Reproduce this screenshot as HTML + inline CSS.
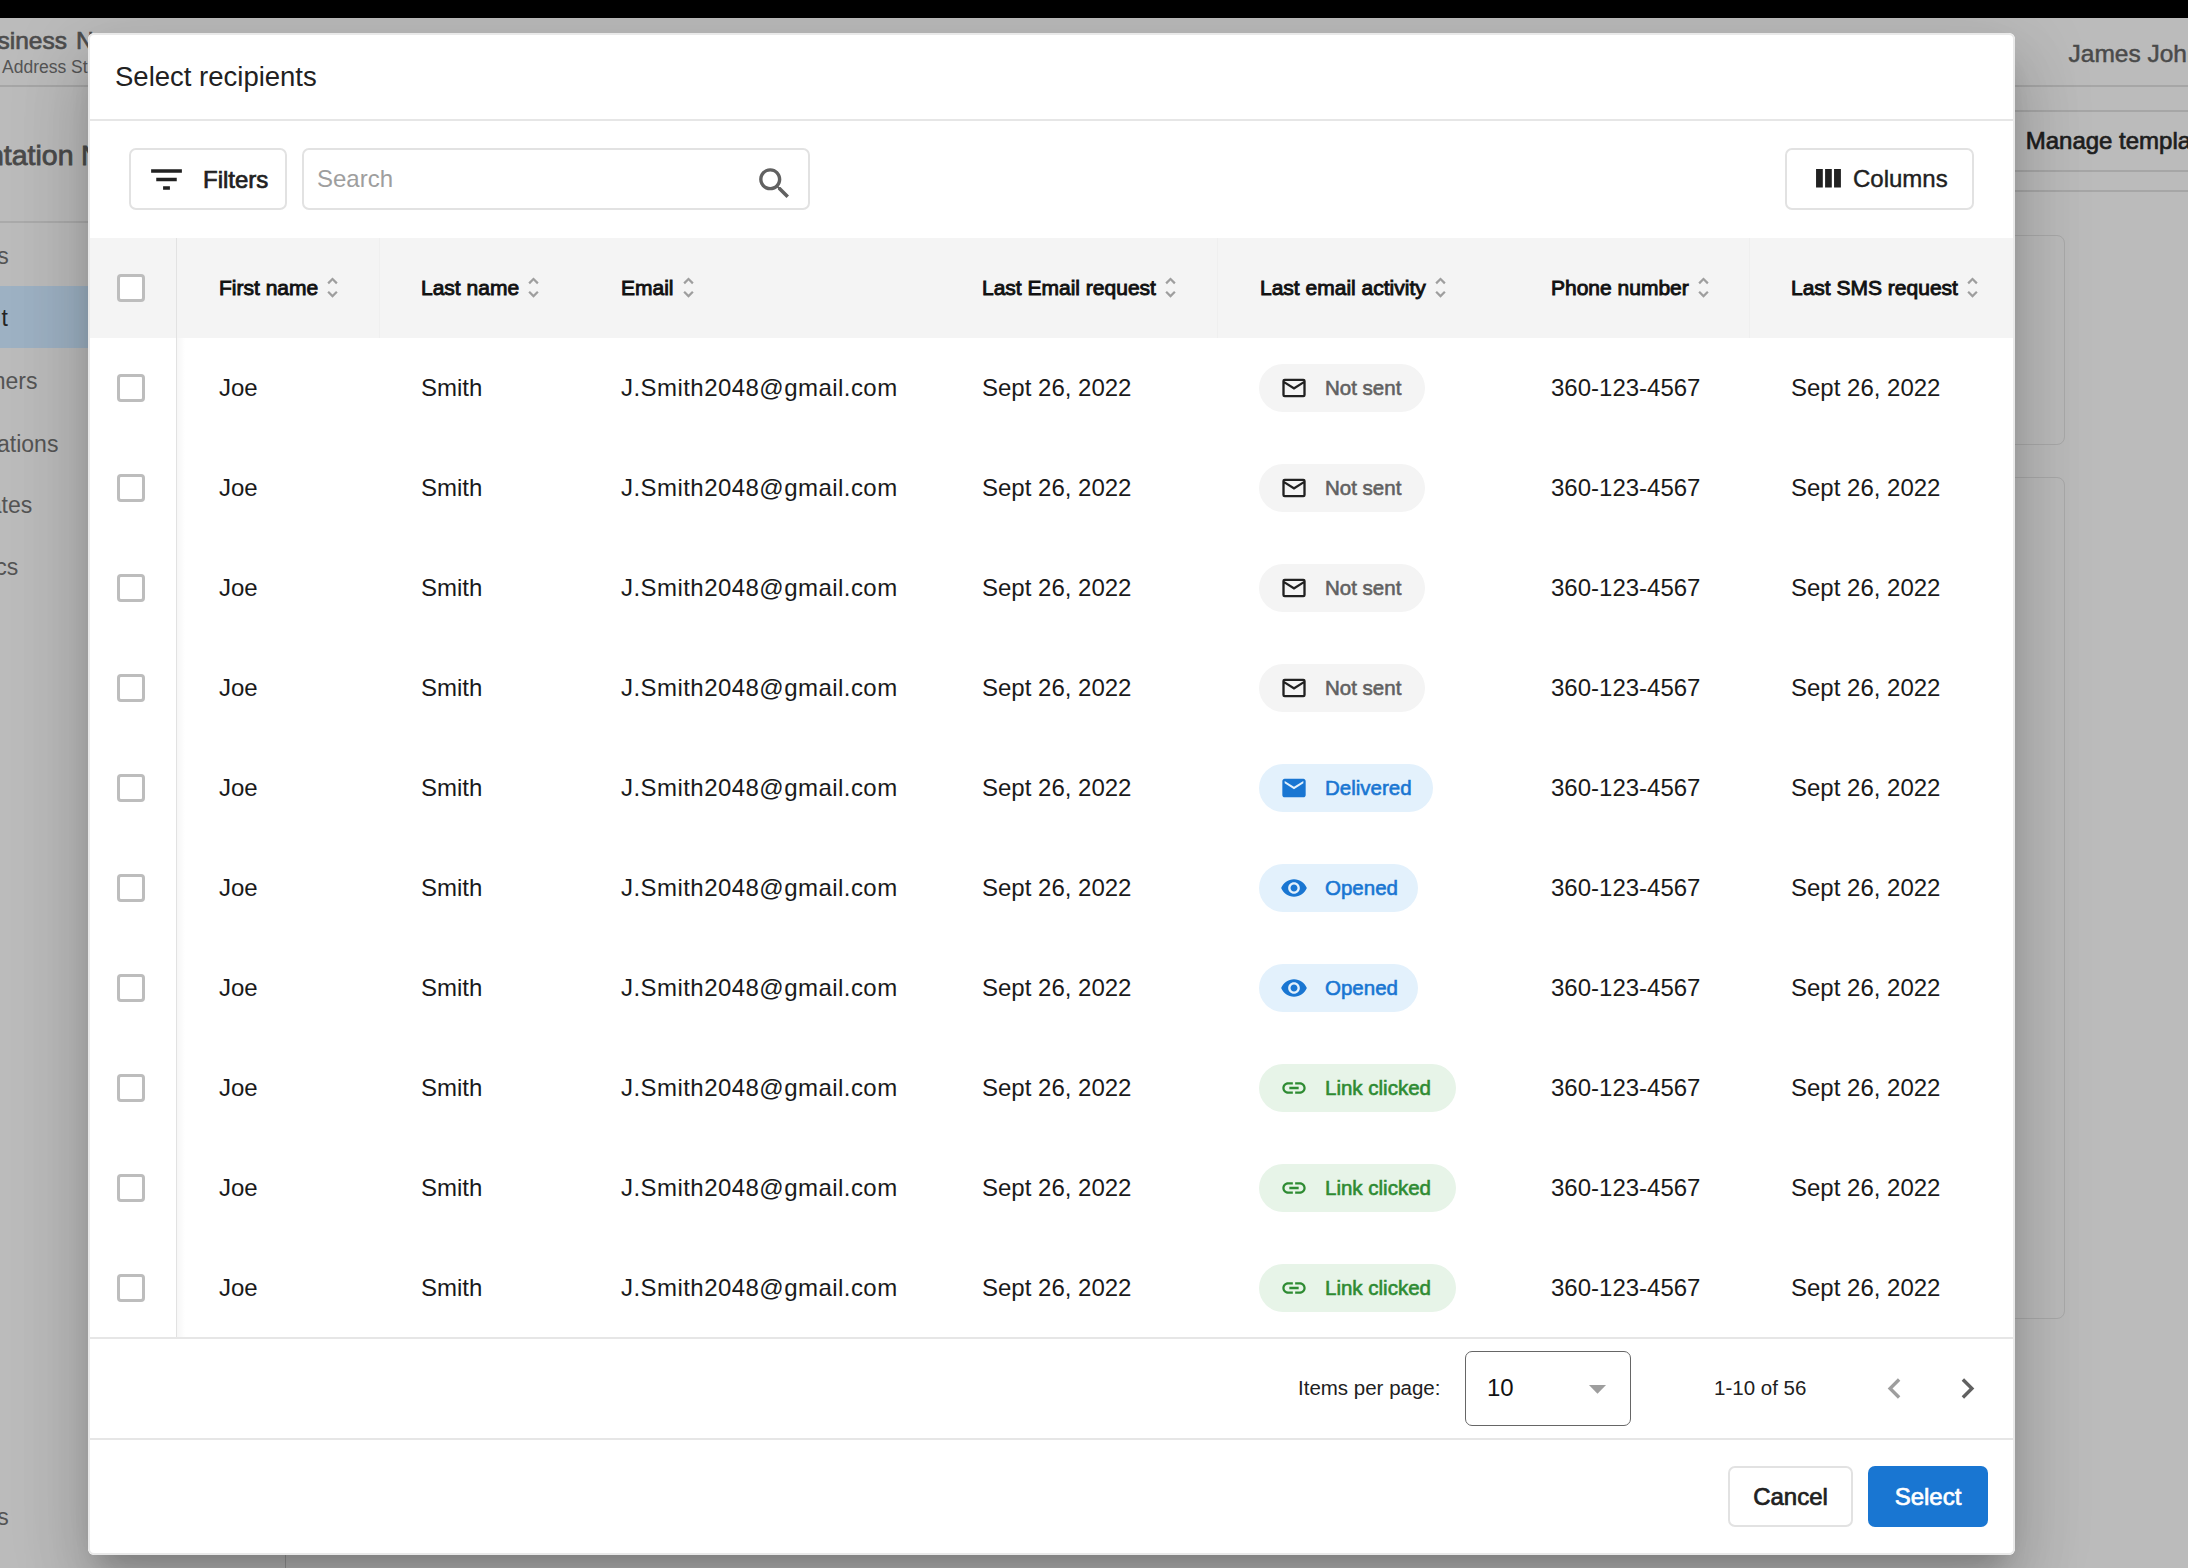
<!DOCTYPE html><html><head><meta charset="utf-8"><style>
*{margin:0;padding:0;box-sizing:border-box}
html,body{width:2188px;height:1568px;overflow:hidden;background:#bbbbbb;font-family:"Liberation Sans",sans-serif;color:#212121}
.a{position:absolute}
.topbar{left:0;top:0;width:2188px;height:18px;background:#000}
.bgtxt{white-space:nowrap}
.modal{left:88px;top:33px;width:1927px;height:1522px;background:#fff;border-radius:6px;
 box-shadow:0 19px 26px -12px rgba(0,0,0,.2),0 41px 65px 5px rgba(0,0,0,.14),0 15px 79px 14px rgba(0,0,0,.08);overflow:hidden}
.m{position:absolute;white-space:nowrap}
.hline{left:0;width:1927px;height:2px;background:#e6e6e6}
.btn{border:2px solid #e2e2e2;border-radius:7px;background:#fff}
.hdr{left:0;top:205px;width:1927px;height:100px;background:#f4f4f4}
.ht{font-size:21px;line-height:100px;color:#111;-webkit-text-stroke:0.9px #111}
.ht svg{-webkit-text-stroke:0}
.cell{font-size:24px;line-height:100px;color:#1a1a1a}
.cb{width:27.5px;height:27.5px;border:3.3px solid #bdbdbd;border-radius:4px}
.chip{height:48px;border-radius:24px}
.chip span{position:absolute;left:66px;top:0;line-height:48px;font-size:20.5px;-webkit-text-stroke:0.6px currentColor}
.chip svg{position:absolute;left:21px;top:10px}
</style></head><body>
<div class="a topbar"></div>
<div class="a bgtxt" style="left:-400px;width:467px;text-align:right;top:20.5px;height:40px;line-height:40px;font-size:24.5px;font-weight:normal;color:#4d4d4d"><span style="-webkit-text-stroke:0.7px #4d4d4d">Business</span></div>
<div class="a bgtxt" style="left:76px;top:20.5px;height:40px;line-height:40px;font-size:24.5px;font-weight:normal;color:#4d4d4d"><span style="-webkit-text-stroke:0.7px #4d4d4d">N</span></div>
<div class="a bgtxt" style="left:2px;top:46.7px;height:40px;line-height:40px;font-size:17.5px;font-weight:normal;color:#555">Address St</div>
<div class="a" style="left:0;top:85px;width:2188px;height:1.5px;background:#a6a6a6"></div>
<div class="a bgtxt" style="left:-400px;width:473.5px;text-align:right;top:135.3px;height:40px;line-height:40px;font-size:28.5px;font-weight:normal;color:#4a4a4a"><span style="-webkit-text-stroke:0.8px #4a4a4a">Presentation</span></div>
<div class="a bgtxt" style="left:81px;top:134.8px;height:40px;line-height:40px;font-size:28.5px;font-weight:normal;color:#4a4a4a"><span style="-webkit-text-stroke:0.8px #4a4a4a">N</span></div>
<div class="a" style="left:0;top:221px;width:290px;height:2px;background:#aaa"></div>
<div class="a" style="left:0;top:286px;width:290px;height:62px;background:#9db1c3"></div>
<div class="a bgtxt" style="left:-400px;width:408.8px;text-align:right;top:235.5px;height:40px;line-height:40px;font-size:23px;font-weight:normal;color:#545454">Contacts</div>
<div class="a bgtxt" style="left:-400px;width:408px;text-align:right;top:298.3px;height:40px;line-height:40px;font-size:23px;font-weight:normal;color:#242424">t</div>
<div class="a bgtxt" style="left:-400px;width:437.5px;text-align:right;top:361.0px;height:40px;line-height:40px;font-size:23px;font-weight:normal;color:#545454">Partners</div>
<div class="a bgtxt" style="left:-400px;width:458.4px;text-align:right;top:423.5px;height:40px;line-height:40px;font-size:23px;font-weight:normal;color:#545454">Integrations</div>
<div class="a bgtxt" style="left:-400px;width:432.2px;text-align:right;top:485.0px;height:40px;line-height:40px;font-size:23px;font-weight:normal;color:#545454">Templates</div>
<div class="a bgtxt" style="left:-400px;width:418.2px;text-align:right;top:547.0px;height:40px;line-height:40px;font-size:23px;font-weight:normal;color:#545454">Analytics</div>
<div class="a bgtxt" style="left:-400px;width:408.8px;text-align:right;top:1497.0px;height:40px;line-height:40px;font-size:23px;font-weight:normal;color:#545454">s</div>
<div class="a" style="left:285px;top:1540px;width:1px;height:28px;background:#999"></div>
<div class="a bgtxt" style="left:2068.5px;top:33.8px;height:40px;line-height:40px;font-size:24.5px;font-weight:normal;color:#4a4a4a"><span style="-webkit-text-stroke:0.5px #4a4a4a">James Johnson</span></div>
<div class="a" style="left:2015px;top:110px;width:173px;height:1.5px;background:#a6a6a6"></div>
<div class="a bgtxt" style="left:2025.7px;top:121.3px;height:40px;line-height:40px;font-size:24px;font-weight:normal;color:#1e1e1e"><span style="-webkit-text-stroke:0.7px #1e1e1e">Manage templates</span></div>
<div class="a" style="left:2015px;top:170px;width:173px;height:1.5px;background:#a6a6a6"></div>
<div class="a" style="left:2015px;top:190px;width:173px;height:2px;background:#a6a6a6"></div>
<div class="a" style="left:1900px;top:235px;width:165px;height:210px;border:1.5px solid #a9a9a9;border-radius:8px"></div>
<div class="a" style="left:1900px;top:477px;width:165px;height:842px;border:1.5px solid #a9a9a9;border-radius:8px"></div>
<div class="a modal">
<div class="m" style="left:27px;top:24px;font-size:27.5px;line-height:40px;color:#212121">Select recipients</div>
<div class="m hline" style="top:86px"></div>
<div class="m btn" style="left:41px;top:115px;width:158px;height:61.5px"></div>
<svg class="m" style="left:58px;top:126px" width="41" height="41" viewBox="0 0 24 24" fill="#212121"><path d="M10 18h4v-2h-4v2zM3 6v2h18V6H3zm3 7h12v-2H6v2z"/></svg>
<div class="m" style="left:115px;top:115.7px;line-height:61px;font-size:24px;color:#212121;-webkit-text-stroke:0.7px #212121">Filters</div>
<div class="m btn" style="left:214px;top:115px;width:508px;height:61.5px"></div>
<div class="m" style="left:229px;top:115px;line-height:61px;font-size:24px;color:#9e9e9e">Search</div>
<svg class="m" style="left:666px;top:130px" width="41" height="41" viewBox="0 0 24 24" fill="#616161"><path d="M15.5 14h-.79l-.28-.27C15.41 12.59 16 11.11 16 9.5 16 5.91 13.09 3 9.5 3S3 5.91 3 9.5 5.91 16 9.5 16c1.61 0 3.090-.59 4.23-1.57l.27.28v.79l5 4.99L20.49 19l-4.99-5zm-6 0C7.01 14 5 11.99 5 9.5S7.01 5 9.5 5 14 7.01 14 9.5 11.99 14 9.5 14z"/></svg>
<div class="m btn" style="left:1697px;top:115px;width:189px;height:61.5px"></div>
<svg class="m" style="left:1720px;top:130px" width="40" height="30" viewBox="0 0 40 30" fill="#212121"><rect x="8.05" y="6" width="6.75" height="18.5"/><rect x="17.1" y="6" width="6.7" height="18.5"/><rect x="26.05" y="6" width="6.85" height="18.5"/></svg>
<div class="m" style="left:1765px;top:115px;line-height:61px;font-size:24px;color:#212121;-webkit-text-stroke:0.4px #212121">Columns</div>
<div class="m hdr"></div>
<div class="m" style="left:88px;top:205px;width:1px;height:1100px;background:#e2e2e2"></div>
<div class="m" style="left:89px;top:305px;width:8px;height:1000px;background:linear-gradient(90deg,rgba(0,0,0,.035),rgba(0,0,0,0))"></div>
<div class="m" style="left:291px;top:205px;width:1px;height:100px;background:#efefef"></div>
<div class="m" style="left:1129px;top:205px;width:1px;height:100px;background:#efefef"></div>
<div class="m" style="left:1661px;top:205px;width:1px;height:100px;background:#efefef"></div>
<div class="m cb" style="left:29px;top:241px;background:#fff"></div>
<div class="m ht" style="left:131px;top:205px"><span class="hts">First name</span><svg style="vertical-align:middle;margin-left:1px;position:relative;top:-2px" width="27" height="27" viewBox="0 0 24 24" fill="#9e9e9e"><path d="M12 5.83L15.17 9l1.41-1.41L12 3 7.41 7.59 8.83 9 12 5.83zm0 12.34L8.83 15l-1.41 1.41L12 21l4.59-4.59L15.17 15 12 18.17z"/></svg></div>
<div class="m ht" style="left:333px;top:205px"><span class="hts">Last name</span><svg style="vertical-align:middle;margin-left:1px;position:relative;top:-2px" width="27" height="27" viewBox="0 0 24 24" fill="#9e9e9e"><path d="M12 5.83L15.17 9l1.41-1.41L12 3 7.41 7.59 8.83 9 12 5.83zm0 12.34L8.83 15l-1.41 1.41L12 21l4.59-4.59L15.17 15 12 18.17z"/></svg></div>
<div class="m ht" style="left:533px;top:205px"><span class="hts">Email</span><svg style="vertical-align:middle;margin-left:1px;position:relative;top:-2px" width="27" height="27" viewBox="0 0 24 24" fill="#9e9e9e"><path d="M12 5.83L15.17 9l1.41-1.41L12 3 7.41 7.59 8.83 9 12 5.83zm0 12.34L8.83 15l-1.41 1.41L12 21l4.59-4.59L15.17 15 12 18.17z"/></svg></div>
<div class="m ht" style="left:894px;top:205px"><span class="hts">Last Email request</span><svg style="vertical-align:middle;margin-left:1px;position:relative;top:-2px" width="27" height="27" viewBox="0 0 24 24" fill="#9e9e9e"><path d="M12 5.83L15.17 9l1.41-1.41L12 3 7.41 7.59 8.83 9 12 5.83zm0 12.34L8.83 15l-1.41 1.41L12 21l4.59-4.59L15.17 15 12 18.17z"/></svg></div>
<div class="m ht" style="left:1172px;top:205px"><span class="hts">Last email activity</span><svg style="vertical-align:middle;margin-left:1px;position:relative;top:-2px" width="27" height="27" viewBox="0 0 24 24" fill="#9e9e9e"><path d="M12 5.83L15.17 9l1.41-1.41L12 3 7.41 7.59 8.83 9 12 5.83zm0 12.34L8.83 15l-1.41 1.41L12 21l4.59-4.59L15.17 15 12 18.17z"/></svg></div>
<div class="m ht" style="left:1463px;top:205px"><span class="hts">Phone number</span><svg style="vertical-align:middle;margin-left:1px;position:relative;top:-2px" width="27" height="27" viewBox="0 0 24 24" fill="#9e9e9e"><path d="M12 5.83L15.17 9l1.41-1.41L12 3 7.41 7.59 8.83 9 12 5.83zm0 12.34L8.83 15l-1.41 1.41L12 21l4.59-4.59L15.17 15 12 18.17z"/></svg></div>
<div class="m ht" style="left:1703px;top:205px"><span class="hts">Last SMS request</span><svg style="vertical-align:middle;margin-left:1px;position:relative;top:-2px" width="27" height="27" viewBox="0 0 24 24" fill="#9e9e9e"><path d="M12 5.83L15.17 9l1.41-1.41L12 3 7.41 7.59 8.83 9 12 5.83zm0 12.34L8.83 15l-1.41 1.41L12 21l4.59-4.59L15.17 15 12 18.17z"/></svg></div>
<div class="m cb" style="left:29px;top:341px"></div>
<div class="m cell" style="left:131px;top:305px">Joe</div>
<div class="m cell" style="left:333px;top:305px">Smith</div>
<div class="m cell" style="left:533px;top:305px"><span style="letter-spacing:.45px">J.Smith2048@gmail.com</span></div>
<div class="m cell" style="left:894px;top:305px">Sept 26, 2022</div>
<div class="m cell" style="left:1463px;top:305px">360-123-4567</div>
<div class="m cell" style="left:1703px;top:305px">Sept 26, 2022</div>
<div class="m chip" style="left:1171px;top:331px;width:166px;background:#f4f4f4"><svg width="28" height="28" viewBox="0 0 24 24" fill="#212121"><path d="M4 4h16a2 2 0 0 1 2 2v12a2 2 0 0 1-2 2H4a2 2 0 0 1-2-2V6a2 2 0 0 1 2-2zm0 2v12h16V6zm0 .2 8 5 8-5v2.2l-8 5-8-5z"/></svg><span style="color:#616161">Not sent</span></div>
<div class="m cb" style="left:29px;top:441px"></div>
<div class="m cell" style="left:131px;top:405px">Joe</div>
<div class="m cell" style="left:333px;top:405px">Smith</div>
<div class="m cell" style="left:533px;top:405px"><span style="letter-spacing:.45px">J.Smith2048@gmail.com</span></div>
<div class="m cell" style="left:894px;top:405px">Sept 26, 2022</div>
<div class="m cell" style="left:1463px;top:405px">360-123-4567</div>
<div class="m cell" style="left:1703px;top:405px">Sept 26, 2022</div>
<div class="m chip" style="left:1171px;top:431px;width:166px;background:#f4f4f4"><svg width="28" height="28" viewBox="0 0 24 24" fill="#212121"><path d="M4 4h16a2 2 0 0 1 2 2v12a2 2 0 0 1-2 2H4a2 2 0 0 1-2-2V6a2 2 0 0 1 2-2zm0 2v12h16V6zm0 .2 8 5 8-5v2.2l-8 5-8-5z"/></svg><span style="color:#616161">Not sent</span></div>
<div class="m cb" style="left:29px;top:541px"></div>
<div class="m cell" style="left:131px;top:505px">Joe</div>
<div class="m cell" style="left:333px;top:505px">Smith</div>
<div class="m cell" style="left:533px;top:505px"><span style="letter-spacing:.45px">J.Smith2048@gmail.com</span></div>
<div class="m cell" style="left:894px;top:505px">Sept 26, 2022</div>
<div class="m cell" style="left:1463px;top:505px">360-123-4567</div>
<div class="m cell" style="left:1703px;top:505px">Sept 26, 2022</div>
<div class="m chip" style="left:1171px;top:531px;width:166px;background:#f4f4f4"><svg width="28" height="28" viewBox="0 0 24 24" fill="#212121"><path d="M4 4h16a2 2 0 0 1 2 2v12a2 2 0 0 1-2 2H4a2 2 0 0 1-2-2V6a2 2 0 0 1 2-2zm0 2v12h16V6zm0 .2 8 5 8-5v2.2l-8 5-8-5z"/></svg><span style="color:#616161">Not sent</span></div>
<div class="m cb" style="left:29px;top:641px"></div>
<div class="m cell" style="left:131px;top:605px">Joe</div>
<div class="m cell" style="left:333px;top:605px">Smith</div>
<div class="m cell" style="left:533px;top:605px"><span style="letter-spacing:.45px">J.Smith2048@gmail.com</span></div>
<div class="m cell" style="left:894px;top:605px">Sept 26, 2022</div>
<div class="m cell" style="left:1463px;top:605px">360-123-4567</div>
<div class="m cell" style="left:1703px;top:605px">Sept 26, 2022</div>
<div class="m chip" style="left:1171px;top:631px;width:166px;background:#f4f4f4"><svg width="28" height="28" viewBox="0 0 24 24" fill="#212121"><path d="M4 4h16a2 2 0 0 1 2 2v12a2 2 0 0 1-2 2H4a2 2 0 0 1-2-2V6a2 2 0 0 1 2-2zm0 2v12h16V6zm0 .2 8 5 8-5v2.2l-8 5-8-5z"/></svg><span style="color:#616161">Not sent</span></div>
<div class="m cb" style="left:29px;top:741px"></div>
<div class="m cell" style="left:131px;top:705px">Joe</div>
<div class="m cell" style="left:333px;top:705px">Smith</div>
<div class="m cell" style="left:533px;top:705px"><span style="letter-spacing:.45px">J.Smith2048@gmail.com</span></div>
<div class="m cell" style="left:894px;top:705px">Sept 26, 2022</div>
<div class="m cell" style="left:1463px;top:705px">360-123-4567</div>
<div class="m cell" style="left:1703px;top:705px">Sept 26, 2022</div>
<div class="m chip" style="left:1171px;top:731px;width:174px;background:#e3f1fc"><svg width="28" height="28" viewBox="0 0 24 24" fill="#1976d2"><path d="M20 4H4c-1.1 0-1.99.9-1.99 2L2 18c0 1.1.9 2 2 2h16c1.1 0 2-.9 2-2V6c0-1.1-.9-2-2-2zm0 4l-8 5-8-5V6l8 5 8-5v2z"/></svg><span style="color:#1976d2">Delivered</span></div>
<div class="m cb" style="left:29px;top:841px"></div>
<div class="m cell" style="left:131px;top:805px">Joe</div>
<div class="m cell" style="left:333px;top:805px">Smith</div>
<div class="m cell" style="left:533px;top:805px"><span style="letter-spacing:.45px">J.Smith2048@gmail.com</span></div>
<div class="m cell" style="left:894px;top:805px">Sept 26, 2022</div>
<div class="m cell" style="left:1463px;top:805px">360-123-4567</div>
<div class="m cell" style="left:1703px;top:805px">Sept 26, 2022</div>
<div class="m chip" style="left:1171px;top:831px;width:159px;background:#e3f1fc"><svg width="28" height="28" viewBox="0 0 24 24" fill="#1976d2"><path d="M12 4.5C7 4.5 2.73 7.610 1 12c1.73 4.39 6 7.5 11 7.5s9.27-3.11 11-7.5c-1.73-4.39-6-7.5-11-7.5zM12 17c-2.76 0-5-2.24-5-5s2.24-5 5-5 5 2.24 5 5-2.24 5-5 5zm0-8c-1.66 0-3 1.34-3 3s1.34 3 3 3 3-1.34 3-3-1.340-3-3-3z"/></svg><span style="color:#1976d2">Opened</span></div>
<div class="m cb" style="left:29px;top:941px"></div>
<div class="m cell" style="left:131px;top:905px">Joe</div>
<div class="m cell" style="left:333px;top:905px">Smith</div>
<div class="m cell" style="left:533px;top:905px"><span style="letter-spacing:.45px">J.Smith2048@gmail.com</span></div>
<div class="m cell" style="left:894px;top:905px">Sept 26, 2022</div>
<div class="m cell" style="left:1463px;top:905px">360-123-4567</div>
<div class="m cell" style="left:1703px;top:905px">Sept 26, 2022</div>
<div class="m chip" style="left:1171px;top:931px;width:159px;background:#e3f1fc"><svg width="28" height="28" viewBox="0 0 24 24" fill="#1976d2"><path d="M12 4.5C7 4.5 2.73 7.610 1 12c1.73 4.39 6 7.5 11 7.5s9.27-3.11 11-7.5c-1.73-4.39-6-7.5-11-7.5zM12 17c-2.76 0-5-2.24-5-5s2.24-5 5-5 5 2.24 5 5-2.24 5-5 5zm0-8c-1.66 0-3 1.34-3 3s1.34 3 3 3 3-1.34 3-3-1.340-3-3-3z"/></svg><span style="color:#1976d2">Opened</span></div>
<div class="m cb" style="left:29px;top:1041px"></div>
<div class="m cell" style="left:131px;top:1005px">Joe</div>
<div class="m cell" style="left:333px;top:1005px">Smith</div>
<div class="m cell" style="left:533px;top:1005px"><span style="letter-spacing:.45px">J.Smith2048@gmail.com</span></div>
<div class="m cell" style="left:894px;top:1005px">Sept 26, 2022</div>
<div class="m cell" style="left:1463px;top:1005px">360-123-4567</div>
<div class="m cell" style="left:1703px;top:1005px">Sept 26, 2022</div>
<div class="m chip" style="left:1171px;top:1031px;width:197px;background:#e7f4e8"><svg width="28" height="28" viewBox="0 0 24 24" fill="#2e8b32"><path d="M3.9 12c0-1.71 1.39-3.1 3.1-3.1h4V7H7c-2.76 0-5 2.24-5 5s2.24 5 5 5h4v-1.9H7c-1.71 0-3.1-1.39-3.1-3.1zM8 13h8v-2H8v2zm9-6h-4v1.9h4c1.71 0 3.1 1.39 3.1 3.1s-1.39 3.1-3.1 3.1h-4V17h4c2.76 0 5-2.24 5-5s-2.24-5-5-5z"/></svg><span style="color:#2e8b32">Link clicked</span></div>
<div class="m cb" style="left:29px;top:1141px"></div>
<div class="m cell" style="left:131px;top:1105px">Joe</div>
<div class="m cell" style="left:333px;top:1105px">Smith</div>
<div class="m cell" style="left:533px;top:1105px"><span style="letter-spacing:.45px">J.Smith2048@gmail.com</span></div>
<div class="m cell" style="left:894px;top:1105px">Sept 26, 2022</div>
<div class="m cell" style="left:1463px;top:1105px">360-123-4567</div>
<div class="m cell" style="left:1703px;top:1105px">Sept 26, 2022</div>
<div class="m chip" style="left:1171px;top:1131px;width:197px;background:#e7f4e8"><svg width="28" height="28" viewBox="0 0 24 24" fill="#2e8b32"><path d="M3.9 12c0-1.71 1.39-3.1 3.1-3.1h4V7H7c-2.76 0-5 2.24-5 5s2.24 5 5 5h4v-1.9H7c-1.71 0-3.1-1.39-3.1-3.1zM8 13h8v-2H8v2zm9-6h-4v1.9h4c1.71 0 3.1 1.39 3.1 3.1s-1.39 3.1-3.1 3.1h-4V17h4c2.76 0 5-2.24 5-5s-2.24-5-5-5z"/></svg><span style="color:#2e8b32">Link clicked</span></div>
<div class="m cb" style="left:29px;top:1241px"></div>
<div class="m cell" style="left:131px;top:1205px">Joe</div>
<div class="m cell" style="left:333px;top:1205px">Smith</div>
<div class="m cell" style="left:533px;top:1205px"><span style="letter-spacing:.45px">J.Smith2048@gmail.com</span></div>
<div class="m cell" style="left:894px;top:1205px">Sept 26, 2022</div>
<div class="m cell" style="left:1463px;top:1205px">360-123-4567</div>
<div class="m cell" style="left:1703px;top:1205px">Sept 26, 2022</div>
<div class="m chip" style="left:1171px;top:1231px;width:197px;background:#e7f4e8"><svg width="28" height="28" viewBox="0 0 24 24" fill="#2e8b32"><path d="M3.9 12c0-1.71 1.39-3.1 3.1-3.1h4V7H7c-2.76 0-5 2.24-5 5s2.24 5 5 5h4v-1.9H7c-1.71 0-3.1-1.39-3.1-3.1zM8 13h8v-2H8v2zm9-6h-4v1.9h4c1.71 0 3.1 1.39 3.1 3.1s-1.39 3.1-3.1 3.1h-4V17h4c2.76 0 5-2.24 5-5s-2.24-5-5-5z"/></svg><span style="color:#2e8b32">Link clicked</span></div>
<div class="m hline" style="top:1304px"></div>
<div class="m" style="left:1210px;top:1305px;line-height:100px;font-size:20.5px;color:#212121">Items per page:</div>
<div class="m" style="left:1377px;top:1317.5px;width:166px;height:75.5px;border:1.8px solid #666;border-radius:7px"></div>
<div class="m" style="left:1399px;top:1305px;line-height:100px;font-size:24px;color:#111">10</div>
<svg class="m" style="left:1489px;top:1334.5px" width="41" height="41" viewBox="0 0 24 24" fill="#9e9e9e"><path d="M7 10l5 5 5-5z"/></svg>
<div class="m" style="left:1626px;top:1305px;line-height:100px;font-size:20.5px;color:#212121">1-10 of 56</div>
<svg class="m" style="left:1786px;top:1335px" width="41" height="41" viewBox="0 0 24 24" fill="#9e9e9e"><path d="M15.41 7.41L14 6l-6 6 6 6 1.41-1.41L10.83 12z"/></svg>
<svg class="m" style="left:1859px;top:1335px" width="41" height="41" viewBox="0 0 24 24" fill="#616161"><path d="M10 6L8.59 7.41 13.17 12l-4.58 4.59L10 18l6-6z"/></svg>
<div class="m hline" style="top:1405px"></div>
<div class="m btn" style="left:1640px;top:1433px;width:125px;height:61px;line-height:58.5px;text-align:center;font-size:24px;color:#212121;-webkit-text-stroke:0.7px #212121">Cancel</div>
<div class="m" style="left:1780px;top:1433px;width:120px;height:61px;border-radius:7px;background:#1976d2;line-height:62.5px;text-align:center;font-size:24px;color:#fff;-webkit-text-stroke:0.7px #fff">Select</div>
<div class="m" style="left:0;top:0;width:1927px;height:1522px;border:2px solid #e9e9e9;border-radius:6px"></div>
</div>
</body></html>
